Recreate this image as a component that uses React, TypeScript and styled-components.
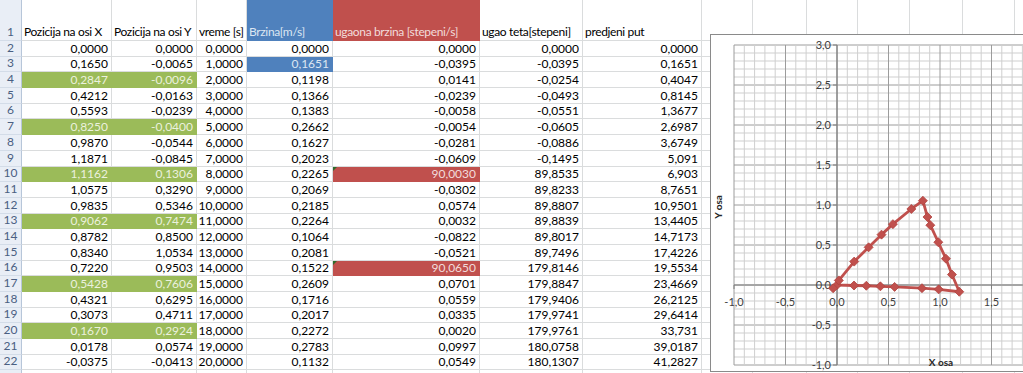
import React, { FC } from 'react';

import styled, { createGlobalStyle } from 'styled-components';

/**
 *
 * Static data
 */
type Fill = 'green' | 'blue' | 'red';

const fills: Record<Fill, { bg: string; fg: string }> = {
  green: { bg: '#9bbb59', fg: '#ebf1de' },
  blue: { bg: '#4f81bd', fg: '#dce6f2' },
  red: { bg: '#c0504d', fg: '#f2dcdb' },
};

const colWidths = [22, 90, 85, 50, 86, 147, 103, 119, 51, 54, 51, 52, 53, 52, 52];
const extraCols = colWidths.length - 8;

const headers: { label: string; fill?: Fill }[] = [
  { label: 'Pozicija na osi X' },
  { label: 'Pozicija na osi Y' },
  { label: 'vreme [s]' },
  { label: 'Brzina[m/s]', fill: 'blue' },
  { label: 'ugaona brzina [stepeni/s]', fill: 'red' },
  { label: 'ugao teta[stepeni]' },
  { label: 'predjeni put' },
];

const rows = [
  ['0,0000', '0,0000', '0,0000', '0,0000', '0,0000', '0,0000', '0,0000'],
  ['0,1650', '-0,0065', '1,0000', '0,1651', '-0,0395', '-0,0395', '0,1651'],
  ['0,2847', '-0,0096', '2,0000', '0,1198', '0,0141', '-0,0254', '0,4047'],
  ['0,4212', '-0,0163', '3,0000', '0,1366', '-0,0239', '-0,0493', '0,8145'],
  ['0,5593', '-0,0239', '4,0000', '0,1383', '-0,0058', '-0,0551', '1,3677'],
  ['0,8250', '-0,0400', '5,0000', '0,2662', '-0,0054', '-0,0605', '2,6987'],
  ['0,9870', '-0,0544', '6,0000', '0,1627', '-0,0281', '-0,0886', '3,6749'],
  ['1,1871', '-0,0845', '7,0000', '0,2023', '-0,0609', '-0,1495', '5,091'],
  ['1,1162', '0,1306', '8,0000', '0,2265', '90,0030', '89,8535', '6,903'],
  ['1,0575', '0,3290', '9,0000', '0,2069', '-0,0302', '89,8233', '8,7651'],
  ['0,9835', '0,5346', '10,0000', '0,2185', '0,0574', '89,8807', '10,9501'],
  ['0,9062', '0,7474', '11,0000', '0,2264', '0,0032', '89,8839', '13,4405'],
  ['0,8782', '0,8500', '12,0000', '0,1064', '-0,0822', '89,8017', '14,7173'],
  ['0,8340', '1,0534', '13,0000', '0,2081', '-0,0521', '89,7496', '17,4226'],
  ['0,7220', '0,9503', '14,0000', '0,1522', '90,0650', '179,8146', '19,5534'],
  ['0,5428', '0,7606', '15,0000', '0,2609', '0,0701', '179,8847', '23,4669'],
  ['0,4321', '0,6295', '16,0000', '0,1716', '0,0559', '179,9406', '26,2125'],
  ['0,3073', '0,4711', '17,0000', '0,2017', '0,0335', '179,9741', '29,6414'],
  ['0,1670', '0,2924', '18,0000', '0,2272', '0,0020', '179,9761', '33,731'],
  ['0,0178', '0,0574', '19,0000', '0,2783', '0,0997', '180,0758', '39,0187'],
  ['-0,0375', '-0,0413', '20,0000', '0,1132', '0,0549', '180,1307', '41,2827'],
];

// fills keyed by "row:col" (row = spreadsheet row number, col = 0 for A)
const cellFills: Record<string, Fill> = {
  '3:3': 'blue',
  '10:4': 'red',
  '16:4': 'red',
};
[4, 7, 10, 13, 17, 20].forEach((r) => {
  cellFills[`${r}:0`] = 'green';
  cellFills[`${r}:1`] = 'green';
});

const toNum = (s: string): number => parseFloat(s.replace(',', '.'));
const points = rows.map((r) => ({ x: toNum(r[0]), y: toNum(r[1]) }));

// chart geometry in page pixels
const px = (x: number): number => 837 + x * 103;
const py = (y: number): number => 285 - y * 80;
const steps = (from: number, to: number): number[] => {
  const out: number[] = [];
  for (let i = Math.round(from * 10); i <= Math.round(to * 10); i += 1) out.push(i / 10);
  return out;
};
const fmt = (v: number): string => v.toFixed(1).replace('.', ',');

/**
 *
 * Styles
 */
const GlobalStyle = createGlobalStyle`
  html, body {
    margin: 0;
    padding: 0;
    background: #ffffff;
  }
  * {
    box-sizing: border-box;
  }
`;

const Page = styled.div`
  position: relative;
  width: 1023px;
  height: 373px;
  overflow: hidden;
  background: #ffffff;

  font-family: Lato, 'Open Sans', sans-serif;
  font-size: 12px;
`;

const Sheet = styled.div`
  display: grid;
  grid-template-columns: ${colWidths.map((w) => `${w}px`).join(' ')};
  grid-template-rows: 41px repeat(22, 15.7px);
`;

const RowHead = styled.div`
  display: flex;
  justify-content: center;
  align-items: flex-end;
  padding-bottom: 1px;

  background: #e9eef6;
  color: #4a5f82;
  border-right: 1px solid #b7c6d9;
  border-bottom: 1px solid #d3dce8;
  line-height: 14px;
`;

const Cell = styled.div<{ $fill?: Fill; $header?: boolean }>`
  display: flex;
  justify-content: ${({ $header }) => ($header ? 'flex-start' : 'flex-end')};
  align-items: flex-end;
  padding: ${({ $header }) => ($header ? '0 2px 1px 2px' : '0 3px 0 2px')};
  white-space: nowrap;
  line-height: 14px;
  letter-spacing: ${({ $header }) => ($header ? '-0.35px' : '0')};

  background: ${({ $fill }) => ($fill ? fills[$fill].bg : '#ffffff')};
  color: ${({ $fill }) => ($fill ? fills[$fill].fg : '#000000')};
  border-right: 1px solid ${({ $fill }) => ($fill ? fills[$fill].bg : '#dadcdd')};
  border-bottom: 1px solid ${({ $fill }) => ($fill ? fills[$fill].bg : '#dadcdd')};
`;

const ErrorMark = styled.span`
  position: absolute;
  top: 0;
  left: 0;
  width: 0;
  height: 0;
  border-top: 4px solid #2e6b2a;
  border-right: 4px solid transparent;
`;

const MarkedCell = styled(Cell)`
  position: relative;
`;

const ChartFrame = styled.div`
  position: absolute;
  left: 710px;
  top: 34px;
  width: 340px;
  height: 338px;

  background: #ffffff;
  border: 1px solid #8a8a8a;
`;

const ChartSvg = styled.svg`
  display: block;
  font-family: Lato, 'Open Sans', sans-serif;
`;

/**
 *
 * Components
 */
const ScatterChart: FC = () => {
  const xs = steps(-1, 2);
  const ys = steps(-1, 3);
  const isMajor = (v: number): boolean => Math.abs(v * 2 - Math.round(v * 2)) < 1e-6;
  const line = points.map((p) => `${px(p.x)},${py(p.y)}`).join(' ');

  return (
    <ChartFrame>
      <ChartSvg width={340} height={338} viewBox="711 35 340 338">
        {ys.map((v) => (
          <line
            key={`h${v}`}
            x1={px(-1)}
            x2={px(2)}
            y1={py(v)}
            y2={py(v)}
            stroke={isMajor(v) ? '#9c9c9c' : '#cfcfcf'}
            strokeWidth={1}
          />
        ))}
        {xs.map((v) => (
          <line
            key={`v${v}`}
            x1={px(v)}
            x2={px(v)}
            y1={py(3)}
            y2={py(-1)}
            stroke={isMajor(v) ? '#9c9c9c' : '#cfcfcf'}
            strokeWidth={1}
          />
        ))}
        <line x1={px(-1)} x2={px(2)} y1={py(0)} y2={py(0)} stroke="#7f7f7f" strokeWidth={1.2} />
        <line x1={px(0)} x2={px(0)} y1={py(3)} y2={py(-1)} stroke="#7f7f7f" strokeWidth={1.2} />

        {[-1, -0.5, 0, 0.5, 1, 1.5, 2, 2.5, 3].map((v) => (
          <g key={`yl${v}`}>
            <line x1={px(0) - 4} x2={px(0)} y1={py(v)} y2={py(v)} stroke="#7f7f7f" />
            <text x={px(0) - 6} y={py(v) + 4} textAnchor="end" fontSize={11} fill="#404040">
              {fmt(v)}
            </text>
          </g>
        ))}
        {[-1, -0.5, 0, 0.5, 1, 1.5].map((v) => (
          <g key={`xl${v}`}>
            <line x1={px(v)} x2={px(v)} y1={py(0)} y2={py(0) + 4} stroke="#7f7f7f" />
            <text x={px(v)} y={py(0) + 21} textAnchor="middle" fontSize={11} fill="#404040">
              {fmt(v)}
            </text>
          </g>
        ))}

        <polyline
          points={line}
          fill="none"
          stroke="#c0504d"
          strokeWidth={2.8}
          strokeLinejoin="round"
        />
        {points.map((p, i) => {
          const x = px(p.x);
          const y = py(p.y);
          return (
            <path
              key={i}
              d={`M${x} ${y - 4.5}L${x + 4.5} ${y}L${x} ${y + 4.5}L${x - 4.5} ${y}Z`}
              fill="#c0504d"
              stroke="#b0433f"
              strokeWidth={0.8}
            />
          );
        })}

        <text
          x={718}
          y={207}
          transform="rotate(-90 718 207)"
          textAnchor="middle"
          dominantBaseline="central"
          fontSize={10}
          fontWeight={700}
          fill="#262626"
        >
          Y osa
        </text>
        <text x={941} y={366} textAnchor="middle" fontSize={10} fontWeight={700} fill="#262626">
          X osa
        </text>
      </ChartSvg>
    </ChartFrame>
  );
};

const App: FC = () => (
  <Page>
    <GlobalStyle />
    <Sheet>
      <RowHead>1</RowHead>
      {headers.map((h) => (
        <Cell key={h.label} $header $fill={h.fill}>
          {h.label}
        </Cell>
      ))}
      {Array.from({ length: extraCols }).map((_, i) => (
        <Cell key={`h1-${i}`} />
      ))}

      {rows.map((r, ri) => {
        const rowNo = ri + 2;
        return (
          <React.Fragment key={rowNo}>
            <RowHead>{rowNo}</RowHead>
            {r.map((v, ci) => {
              const fill = cellFills[`${rowNo}:${ci}`];
              return fill === 'red' ? (
                <MarkedCell key={ci} $fill={fill}>
                  <ErrorMark />
                  {v}
                </MarkedCell>
              ) : (
                <Cell key={ci} $fill={fill}>
                  {v}
                </Cell>
              );
            })}
            {Array.from({ length: extraCols }).map((_, i) => (
              <Cell key={`e${rowNo}-${i}`} />
            ))}
          </React.Fragment>
        );
      })}

      <RowHead />
      {Array.from({ length: colWidths.length - 1 }).map((_, i) => (
        <Cell key={`r23-${i}`} />
      ))}
    </Sheet>
    <ScatterChart />
  </Page>
);

export default App;
